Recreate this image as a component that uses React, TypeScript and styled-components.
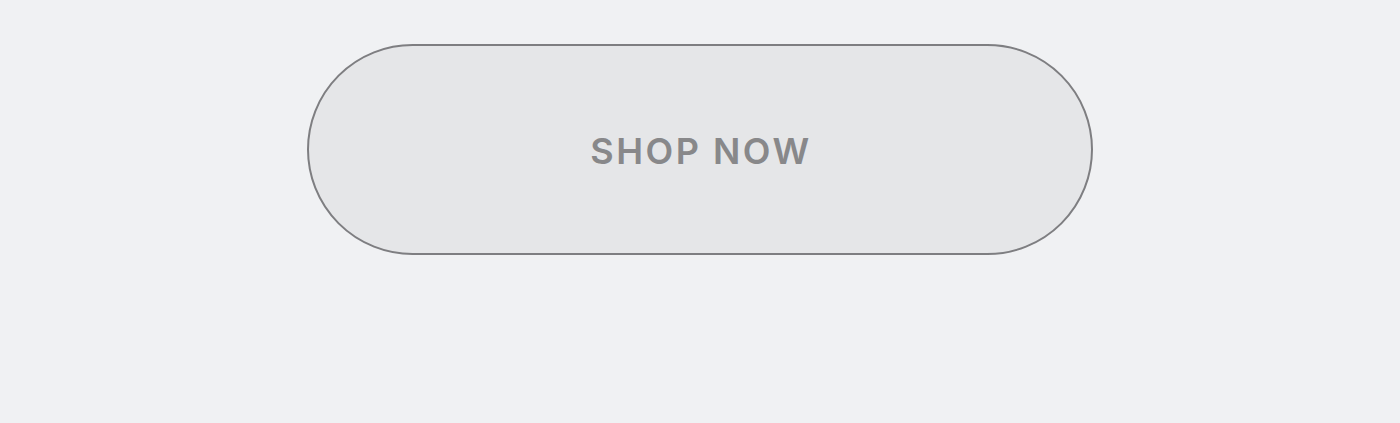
import React from "react";
import styled, { createGlobalStyle } from "styled-components";

const GlobalStyle = createGlobalStyle`
  html, body {
    margin: 0;
    padding: 0;
    background: #f0f1f3;
  }
  body {
    font-family: Inter, "Liberation Sans", Arial, sans-serif;
  }
`;

const Page = styled.main`
  display: flex;
  justify-content: center;
  padding-top: 44px;
  height: 423px;
  box-sizing: border-box;
`;

const ShopButton = styled.button`
  width: 786px;
  height: 211px;
  box-sizing: border-box;
  border: 2px solid #7e7e81;
  border-radius: 106px;
  background: #e5e6e8;
  color: #88888a;
  font-family: Inter, "Liberation Sans", Arial, sans-serif;
  font-weight: 600;
  font-size: 36px;
  letter-spacing: 2.5px;
  text-transform: uppercase;
  cursor: pointer;
  display: flex;
  align-items: center;
  justify-content: center;
  padding: 3px 0 0 2px;
`;

export default function App() {
  return (
    <>
      <GlobalStyle />
      <Page>
        <ShopButton type="button">Shop now</ShopButton>
      </Page>
    </>
  );
}
